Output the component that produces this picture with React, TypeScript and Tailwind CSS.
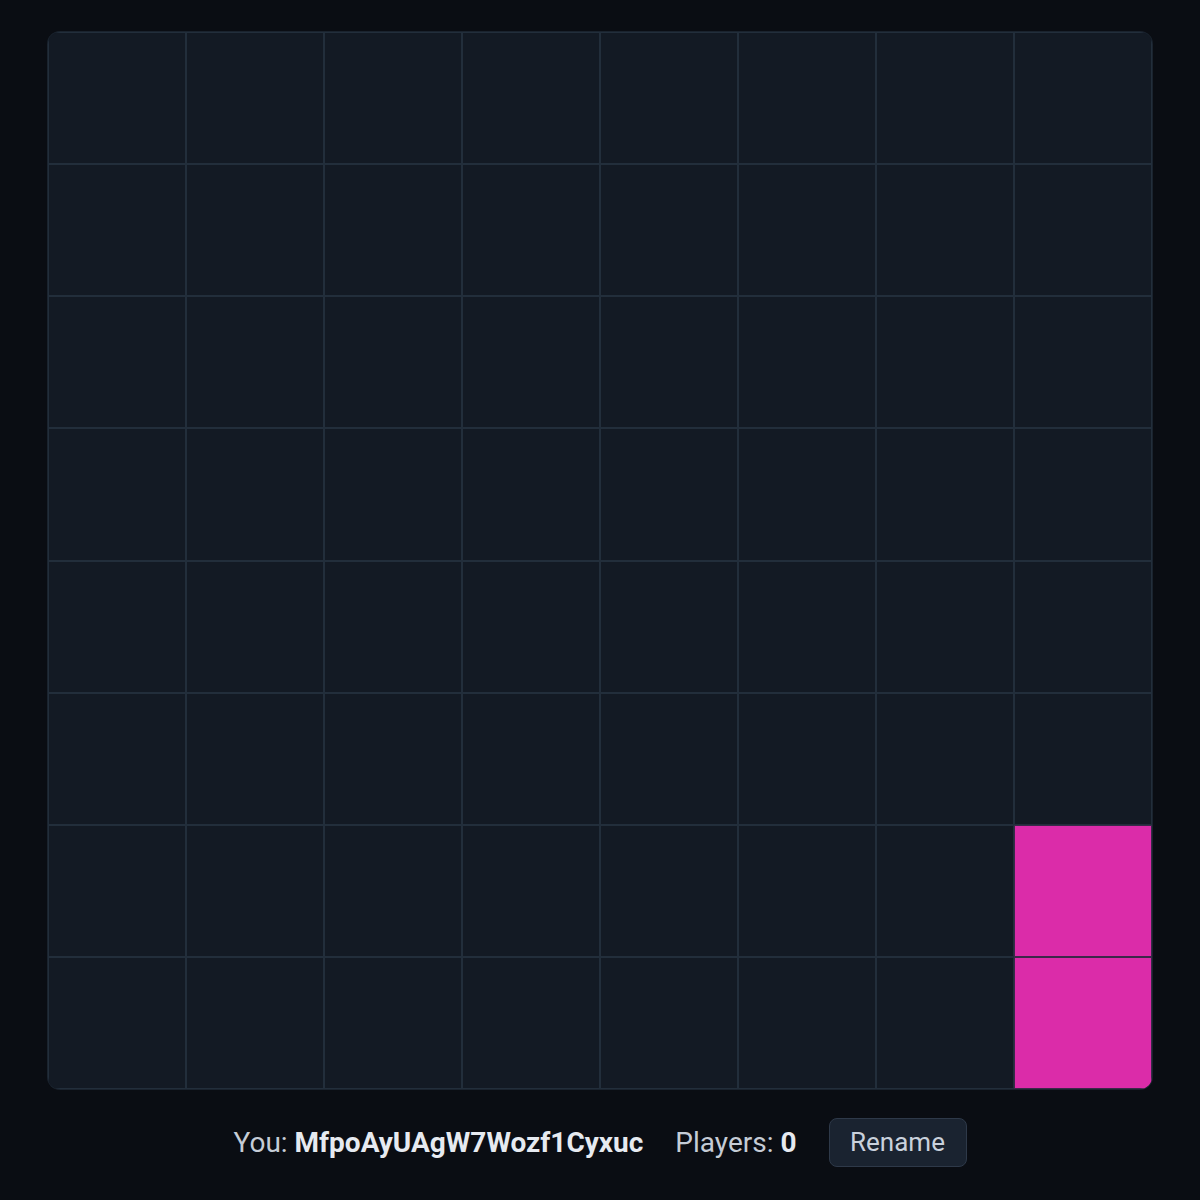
import { useState } from 'react';

const SIZE = 8;

// cells owned by the local player, as row * SIZE + col
const OWNED = new Set([6 * SIZE + 7, 7 * SIZE + 7]);

function Cell({ owned }: { owned: boolean }) {
  return (
    <div
      className={
        owned
          ? 'border border-[#3b2849] bg-[#db2ca9]'
          : 'border border-[#222e3b] bg-[#131a24]'
      }
    />
  );
}

export default function App() {
  const [name] = useState('MfpoAyUAgW7Wozf1Cyxuc');
  const [players] = useState(0);

  return (
    <div
      className="min-h-screen bg-[#0a0d13] px-12 pt-8"
      style={{ fontFamily: 'Roboto, "Noto Sans", sans-serif' }}
    >
      <div className="grid h-[1057px] grid-cols-8 grid-rows-8 overflow-hidden rounded-xl bg-[#131a24] shadow-[0_0_0_1px_#1a232e]">
        {Array.from({ length: SIZE * SIZE }, (_, i) => (
          <Cell key={i} owned={OWNED.has(i)} />
        ))}
      </div>

      <div className="mt-[29px] flex items-center justify-center gap-8 text-[28px] text-[#c5ccd6]">
        <span>
          You: <b className="font-bold text-[#e6eaf0]">{name}</b>
        </span>
        <span>
          Players: <b className="font-bold text-[#e6eaf0]">{players}</b>
        </span>
        <button className="h-[49px] w-[138px] rounded-lg border border-[#2e3949] bg-[#1a2330] text-[26px] text-[#c9d1dc]">
          Rename
        </button>
      </div>
    </div>
  );
}
